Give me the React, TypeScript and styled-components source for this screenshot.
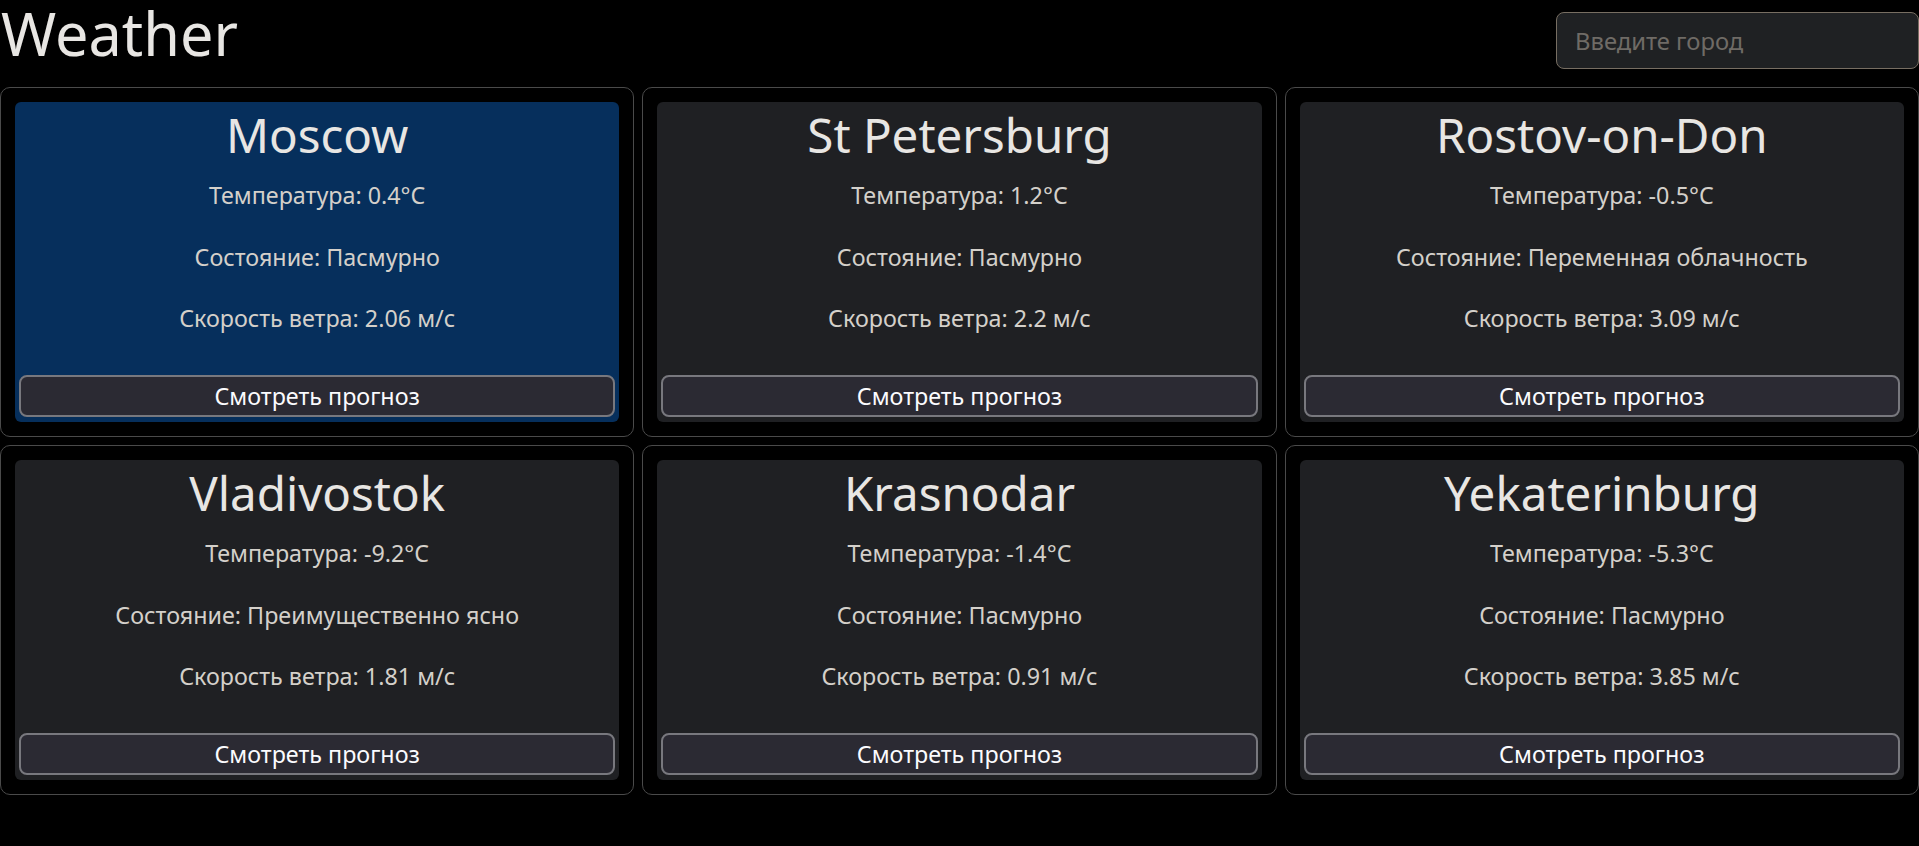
import React from "react";
import styled, { createGlobalStyle } from "styled-components";

const GlobalStyle = createGlobalStyle`
  html, body { margin: 0; padding: 0; background: #000; }
  body { font-family: "Noto Sans", sans-serif; color: #e8e6e3; }
  * { box-sizing: border-box; }
`;

const Page = styled.div`
  width: 1919px;
`;

const Header = styled.header`
  display: flex;
  justify-content: space-between;
  align-items: flex-start;
  height: 87px;
`;

const Title = styled.h1`
  margin: 0;
  padding-left: 1px;
  font-size: 59.4px;
  font-weight: 400;
  line-height: 66px;
  color: #e8e6e3;
`;

const Search = styled.input`
  margin-top: 12px;
  width: 363px;
  height: 57px;
  padding: 0 18px;
  border: 1px solid #776e62;
  border-radius: 8px;
  background: #1f2123;
  color: #e8e6e3;
  font-family: "Noto Sans", sans-serif;
  font-size: 23.8px;
  outline: none;
  &::placeholder { color: #6f6b66; }
`;

const Grid = styled.main`
  display: grid;
  grid-template-columns: repeat(3, 1fr);
  gap: 8px;
`;

const Outer = styled.section`
  border: 1px solid #4a4a4a;
  border-radius: 10px;
  padding: 14px;
`;

const Card = styled.div<{ $active?: boolean }>`
  height: 320px;
  display: flex;
  flex-direction: column;
  padding: 3px 4px 5px;
  border-radius: 6px;
  background: ${(p) => (p.$active ? "#062f5c" : "#1f2023")};
  text-align: center;
`;

const City = styled.h2`
  margin: 0;
  font-size: 47.5px;
  font-weight: 400;
  line-height: 60px;
  color: #e8e6e3;
`;

const Info = styled.div`
  margin-top: 16px;
  display: flex;
  flex-direction: column;
  gap: 33.5px;
`;

const Line = styled.p`
  margin: 0;
  font-size: 23.3px;
  line-height: 28px;
  color: #d4d0ca;
`;

const Button = styled.button`
  margin-top: auto;
  height: 42px;
  width: 100%;
  border: 2px solid #78787e;
  border-radius: 8px;
  background: #2b2a33;
  color: #fbfbfe;
  font-family: "Noto Sans", sans-serif;
  font-size: 23.3px;
  line-height: 28px;
  padding: 0;
  cursor: pointer;
`;

type CityData = { name: string; t: string; s: string; w: string; active?: boolean };

const cities: CityData[] = [
  { name: "Moscow", t: "0.4", s: "Пасмурно", w: "2.06", active: true },
  { name: "St Petersburg", t: "1.2", s: "Пасмурно", w: "2.2" },
  { name: "Rostov-on-Don", t: "-0.5", s: "Переменная облачность", w: "3.09" },
  { name: "Vladivostok", t: "-9.2", s: "Преимущественно ясно", w: "1.81" },
  { name: "Krasnodar", t: "-1.4", s: "Пасмурно", w: "0.91" },
  { name: "Yekaterinburg", t: "-5.3", s: "Пасмурно", w: "3.85" },
];

export default function App() {
  return (
    <Page>
      <GlobalStyle />
      <Header>
        <Title>Weather</Title>
        <Search placeholder="Введите город" />
      </Header>
      <Grid>
        {cities.map((c) => (
          <Outer key={c.name}>
            <Card $active={c.active}>
              <City>{c.name}</City>
              <Info>
                <Line>Температура: {c.t}°C</Line>
                <Line>Состояние: {c.s}</Line>
                <Line>Скорость ветра: {c.w} м/с</Line>
              </Info>
              <Button>Смотреть прогноз</Button>
            </Card>
          </Outer>
        ))}
      </Grid>
    </Page>
  );
}
